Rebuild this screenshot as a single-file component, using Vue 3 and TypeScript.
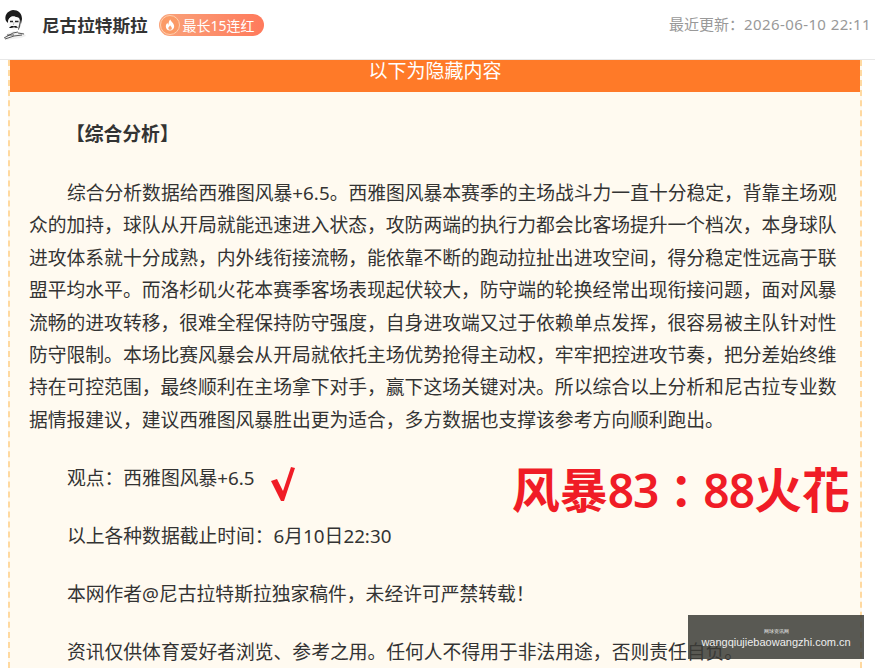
<script setup lang="ts">
const analysis =
  "综合分析数据给西雅图风暴+6.5。西雅图风暴本赛季的主场战斗力一直十分稳定，背靠主场观众的加持，球队从开局就能迅速进入状态，攻防两端的执行力都会比客场提升一个档次，本身球队进攻体系就十分成熟，内外线衔接流畅，能依靠不断的跑动拉扯出进攻空间，得分稳定性远高于联盟平均水平。而洛杉矶火花本赛季客场表现起伏较大，防守端的轮换经常出现衔接问题，面对风暴流畅的进攻转移，很难全程保持防守强度，自身进攻端又过于依赖单点发挥，很容易被主队针对性防守限制。本场比赛风暴会从开局就依托主场优势抢得主动权，牢牢把控进攻节奏，把分差始终维持在可控范围，最终顺利在主场拿下对手，赢下这场关键对决。所以综合以上分析和尼古拉专业数据情报建议，建议西雅图风暴胜出更为适合，多方数据也支撑该参考方向顺利跑出。";
</script>

<template>
  <div class="page">
    <header class="top">
      <div class="author">
        <svg class="avatar" viewBox="0 0 26 30" width="26" height="30">
          <path d="M4 11C2 6 5 1 11 0c5 0 9 3 9 9l-1 5-2-6c-3-1-6-2-8-1-2 1-3 3-3 6z" fill="#1a1a1a" />
          <path d="M6 13c0-3 1-5 3-6 2-1 5 0 8 1l1 6c0 3-2 6-6 6-3 0-6-3-6-7z" fill="#f8f8f8" />
          <path d="M8 11.500h3M13 11.500h3.500" stroke="#222" stroke-width="1.300" />
          <path d="M12 12l-.6 3" stroke="#999" stroke-width=".6" />
          <path d="M7 18c2-2 3-2.400 5-1.500 1-.8 3-.6 4 1.300-2 0-3-.3-4-.6-1 .5-3 .9-5 .8z" fill="#111" />
          <path d="M18 10l1 1-1 6-1.500 3-.5-.5z" fill="#555" />
          <path d="M3 26l3-3 6-2 4 1 6 1 2 3-5 2-8 1-7 1-2-2z" fill="#f0f0f0" />
          <path d="M2 28l9-5 5-1M5 25l7 0M3 29l9-3 8-1M16 23l6 1" stroke="#333" stroke-width=".8" fill="none" />
        </svg>
        <strong class="name">尼古拉特斯拉</strong>
        <span class="streak">
          <span class="fire">
            <svg viewBox="0 0 12 14" width="10" height="12">
              <path d="M6.400 .4c.5 2.400 4.600 4.300 4.600 8.100C11 11.500 8.800 13.600 6 13.600S1 11.500 1 8.700c0-2 1-3.400 2-4.300.1 1.200.6 1.900 1.300 2.200C4 4.400 4.800 2 6.400 .4z" fill="#fff" />
              <path d="M6.200 7.400c.3 1.200 2 1.900 2 3.500 0 1.100-.9 1.900-2.100 1.900S4 12 4 10.900c0-1.500 1.600-2.200 2.200-3.500z" fill="#fba06f" />
            </svg>
          </span>
          最长15连红
        </span>
      </div>
      <span class="updated">最近更新：<span class="date">2026-06-10 22:11</span></span>
    </header>

    <section class="hidden-box">
      <div class="hidden-title">以下为隐藏内容</div>
      <div class="body">
        <p class="heading"><strong>【综合分析】</strong></p>
        <p class="indent">{{ analysis }}</p>
        <div class="verdict">
          <p class="indent">观点：西雅图风暴+6.5</p>
          <svg class="tick" viewBox="0 0 26 36" width="26" height="36">
            <path d="M1 15l6-2 6 12L21 1l4 1-11 33h-3z" fill="#f01c26" />
          </svg>
          <span class="score"><b>风暴</b><span class="digits">83：88</span><b>火花</b></span>
        </div>
        <p class="indent">以上各种数据截止时间：6月10日22:30</p>
        <p class="indent">本网作者@尼古拉特斯拉独家稿件，未经许可严禁转载！</p>
        <p class="indent">资讯仅供体育爱好者浏览、参考之用。任何人不得用于非法用途，否则责任自负。</p>
      </div>
    </section>

    <div class="watermark">
      <span class="mark-title">网球资讯网</span>
      <span>wangqiujiebaowangzhi.com.cn</span>
    </div>
  </div>
</template>

<style scoped>
.page {
  position: relative;
  width: 875px;
  height: 670px;
  overflow: hidden;
  background: #fff;
  font-family: "Noto Sans", "Noto Sans CJK SC", sans-serif;
  color: #333;
}

.top {
  height: 49px;
  display: flex;
  align-items: center;
  justify-content: space-between;
  padding: 0 4px 10px 2px;
  border-bottom: 1px solid #e8e8e8;
}

.author {
  display: flex;
  align-items: center;
}

.avatar {
  margin-right: 14px;
}

.name {
  font-size: 17.6px;
  font-weight: 700;
  color: #333;
}

.streak {
  display: flex;
  align-items: center;
  gap: 3px;
  height: 22px;
  margin-left: 11px;
  padding-right: 9px;
  border-radius: 11px;
  background: linear-gradient(90deg, #f9a37a, #ff7a5c);
  color: #fff;
  font-size: 14px;
}

.fire {
  width: 20px;
  height: 20px;
  margin-left: 1px;
  display: flex;
  align-items: center;
  justify-content: center;
  border-radius: 50%;
  border: 1px solid #ffd0ae;
  box-sizing: border-box;
  background: #fb9a66;
}

.updated {
  font-size: 15px;
  line-height: 18px;
  color: #999;
  margin-bottom: 2px;
}

.date {
  letter-spacing: 0.4px;
}

.hidden-box {
  margin: 0 13px 0 8px;
  border-left: 2px dashed #ffd9a0;
  border-right: 2px dashed #ffd9a0;
  background: #fffaf0;
}

.hidden-title {
  height: 32px;
  background: #ff7a28;
  color: #fff;
  font-size: 19px;
  line-height: 23px;
  text-align: center;
}

.body {
  padding: 26px 20px 0 19px;
  font-size: 18.8px;
  line-height: 32.4px;
}

.body p {
  margin: 0 0 25.6px;
}

.body .heading {
  margin-bottom: 26.6px;
}

.indent {
  text-indent: 38px;
}

.heading {
  padding-left: 37px;
}

.verdict {
  display: flex;
  align-items: flex-start;
}

.tick {
  margin: 4px 0 0 15px;
}

.score {
  margin-left: auto;
  margin-right: -10px;
  margin-top: 0;
  color: #f01c26;
  font-family: "Noto Sans", "Noto Sans CJK TC", sans-serif;
  font-size: 48px;
  line-height: 56px;
  white-space: nowrap;
}

.score b {
  font-weight: 700;
}

.digits {
  font-size: 46px;
  font-weight: 600;
  letter-spacing: -1px;
}

.watermark {
  position: absolute;
  left: 688px;
  top: 615px;
  width: 176px;
  height: 44px;
  display: flex;
  flex-direction: column;
  align-items: center;
  justify-content: center;
  gap: 1px;
  background: rgba(60, 60, 55, 0.85);
  color: #eee;
  font-family: "Liberation Sans", sans-serif;
  font-size: 11px;
}

.mark-title {
  font-size: 5px;
  line-height: 8px;
}
</style>

<style>
html,
body {
  overflow: hidden;
}
</style>
